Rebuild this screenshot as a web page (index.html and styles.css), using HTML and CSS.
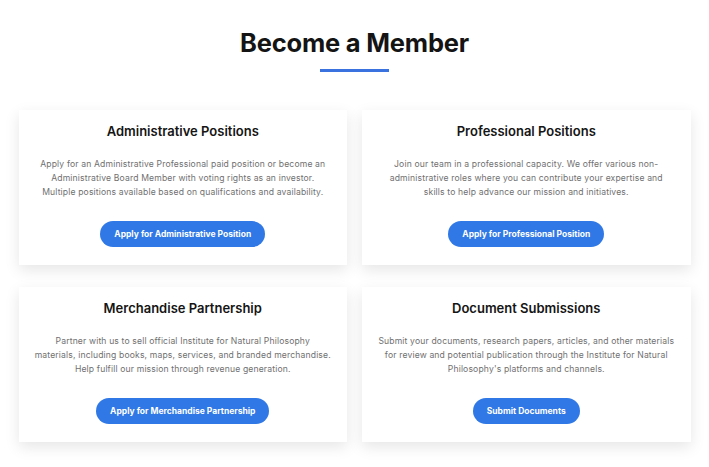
FILE: index.html
```html
<!DOCTYPE html>
<html lang="en">
<head>
<meta charset="utf-8">
<title>Become a Member</title>
<link rel="stylesheet" href="styles.css">
</head>
<body>
<section class="membership">
  <h2 class="section-title">Become a Member</h2>
  <div class="title-rule"></div>
  <div class="card-grid">
    <div class="card">
      <h3 class="card-title">Administrative Positions</h3>
      <p class="card-text">Apply for an Administrative Professional paid position or become an Administrative Board Member with voting rights as an investor. Multiple positions available based on qualifications and availability.</p>
      <a class="btn" href="#">Apply for Administrative Position</a>
    </div>
    <div class="card">
      <h3 class="card-title">Professional Positions</h3>
      <p class="card-text">Join our team in a professional capacity. We offer various non-administrative roles where you can contribute your expertise and skills to help advance our mission and initiatives.</p>
      <a class="btn" href="#">Apply for Professional Position</a>
    </div>
    <div class="card">
      <h3 class="card-title">Merchandise Partnership</h3>
      <p class="card-text">Partner with us to sell official Institute for Natural Philosophy materials, including books, maps, services, and branded merchandise. Help fulfill our mission through revenue generation.</p>
      <a class="btn" href="#">Apply for Merchandise Partnership</a>
    </div>
    <div class="card">
      <h3 class="card-title">Document Submissions</h3>
      <p class="card-text">Submit your documents, research papers, articles, and other materials for review and potential publication through the Institute for Natural Philosophy's platforms and channels.</p>
      <a class="btn" href="#">Submit Documents</a>
    </div>
  </div>
</section>
</body>
</html>
```
FILE: styles.css
```css
* { box-sizing: border-box; }
html, body { margin: 0; padding: 0; background: #ffffff; }
body {
  font-family: Inter, "Noto Sans", sans-serif;
  color: #1a1a1a;
  width: 709px;
  height: 467px;
  overflow: hidden;
}
.membership {
  padding-top: 27px;
  display: flex;
  flex-direction: column;
  align-items: center;
}
.section-title {
  margin: 0;
  font-size: 25.5px;
  line-height: 32px;
  font-weight: 700;
  color: #141414;
  letter-spacing: -0.2px;
}
.title-rule {
  width: 69px;
  height: 3px;
  background: #3a72e0;
  margin-top: 10px;
}
.card-grid {
  margin-top: 38px;
  width: 672px;
  display: grid;
  grid-template-columns: 1fr 1fr;
  column-gap: 15px;
  row-gap: 22px;
}
.card {
  background: #fff;
  box-shadow: 0 5px 14px rgba(0, 0, 0, 0.10);
  padding: 11px 16px 18px;
  display: flex;
  flex-direction: column;
  align-items: center;
  text-align: center;
}
.card-title {
  margin: 0;
  font-size: 13px;
  line-height: 20px;
  font-weight: 600;
  color: #151515;
}
.card-text {
  margin: 16px 0 0;
  font-size: 8.6px;
  letter-spacing: 0.15px;
  line-height: 14px;
  color: #707070;
}
.btn {
  margin-top: 22px;
  display: inline-flex;
  align-items: center;
  justify-content: center;
  height: 26px;
  padding: 0 14px;
  border-radius: 13px;
  background: #2f78e6;
  color: #fff;
  text-decoration: none;
  font-size: 8.5px;
  font-weight: 700;
}
```
